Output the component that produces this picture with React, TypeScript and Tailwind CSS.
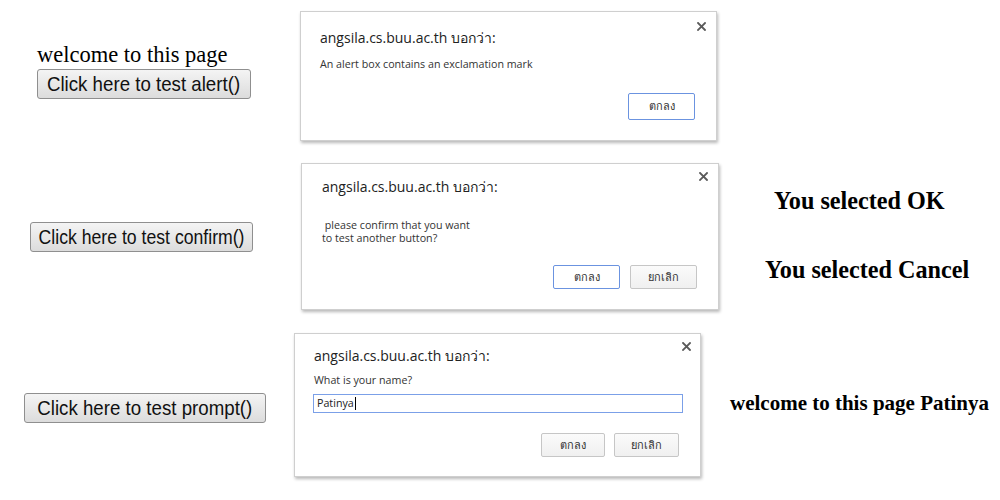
import React from "react";

const sans = { fontFamily: '"Open Sans", "Noto Sans", "DejaVu Sans", sans-serif' };

function CloseX() {
  return (
    <svg width="9" height="9" viewBox="0 0 9 9" className="block">
      <path d="M1 1 L8 8 M8 1 L1 8" stroke="#5a5a5a" strokeWidth="1.8" strokeLinecap="square" />
    </svg>
  );
}

function DlgButton({ label, primary }: { label: string; primary?: boolean }) {
  return (
    <div
      className={
        "flex items-center justify-center rounded-[2px] text-[11px] font-medium text-[#333] " +
        (primary
          ? "border border-[#6b93e0] bg-white"
          : "border border-[#c6c6c6] bg-gradient-to-b from-[#fbfbfb] to-[#f0f0f0]")
      }
      style={{ ...sans, width: "inherit", height: "inherit" }}
    >
      {label}
    </div>
  );
}

function Dialog({
  w,
  h,
  children,
  closeTop,
  closeRight,
}: {
  w: string;
  h: string;
  children: React.ReactNode;
  closeTop: string;
  closeRight: string;
}) {
  return (
    <div
      className={`relative bg-white border border-[#cfcfcf] shadow-[1px_2px_3px_rgba(0,0,0,0.28)] ${w} ${h}`}
      style={sans}
    >
      <div className={`absolute ${closeTop} ${closeRight}`}>
        <CloseX />
      </div>
      {children}
    </div>
  );
}

function PageButton({ label, w, scale }: { label: string; w: string; scale: string }) {
  return (
    <div
      className={`flex h-[30px] items-center justify-center whitespace-nowrap rounded-[3px] border border-[#8f8f8f] bg-gradient-to-b from-[#f4f4f4] to-[#dcdcdc] text-[21px] text-[#111] ${w}`}
      style={{ fontFamily: '"Liberation Sans", Arial, sans-serif' }}
    >
      <span className={`inline-block ${scale}`}>{label}</span>
    </div>
  );
}

const serif = { fontFamily: '"Liberation Serif", "Times New Roman", serif' };

export default function App() {
  return (
    <div className="w-[1000px] h-[500px] bg-white overflow-hidden flex flex-col">
      {/* Row 1 */}
      <div className="flex h-[152px] shrink-0">
        <div className="w-[300px] shrink-0 pl-[37px] pt-[43px]">
          <div className="text-[22.5px] leading-[24px] text-black" style={serif}>
            welcome to this page
          </div>
          <div className="mt-[2px]">
            <PageButton label="Click here to test alert()" w="w-[214px]" scale="scale-x-[0.89]" />
          </div>
        </div>
        <div className="mt-[11px]">
          <Dialog w="w-[417px]" h="h-[130px]" closeTop="top-[10px]" closeRight="right-[10px]">
            <div className="pl-[19px] pt-[16px] text-[14px] leading-[20px] text-[#222]">
              angsila.cs.buu.ac.th บอกว่า:
            </div>
            <div className="pl-[19px] pt-[8px] text-[10.7px] leading-[16px] text-[#333]">
              An alert box contains an exclamation mark
            </div>
            <div className="flex justify-end pr-[21px] pt-[21px]">
              <div className="w-[67px] h-[27px]">
                <DlgButton label="ตกลง" primary />
              </div>
            </div>
          </Dialog>
        </div>
      </div>

      {/* Row 2 */}
      <div className="flex h-[168px] shrink-0">
        <div className="w-[301px] shrink-0 pl-[30px] pt-[70px]">
          <PageButton label="Click here to test confirm()" w="w-[223px]" scale="scale-x-[0.84]" />
        </div>
        <div className="mt-[11px]">
          <Dialog w="w-[418px]" h="h-[147px]" closeTop="top-[8px]" closeRight="right-[10px]">
            <div className="pl-[20px] pt-[13px] text-[14px] leading-[20px] text-[#222]">
              angsila.cs.buu.ac.th บอกว่า:
            </div>
            <div className="pl-[20px] pt-[22px] text-[10.7px] leading-[13px] text-[#333] whitespace-pre">
              {" please confirm that you want\nto test another button?"}
            </div>
            <div className="flex justify-end gap-[10px] pr-[21px] pt-[20px]">
              <div className="w-[67px] h-[24px]">
                <DlgButton label="ตกลง" primary />
              </div>
              <div className="w-[67px] h-[24px]">
                <DlgButton label="ยกเลิก" />
              </div>
            </div>
          </Dialog>
        </div>
        <div className="flex flex-col pl-[46px] pt-[34px] text-[24.2px] font-bold text-black" style={serif}>
          <div className="pl-[9px] leading-[30px]">You selected OK</div>
          <div className="mt-[39px] leading-[30px]">You selected Cancel</div>
        </div>
      </div>

      {/* Row 3 */}
      <div className="flex h-[180px] shrink-0">
        <div className="w-[294px] shrink-0 pl-[24px] pt-[73px]">
          <PageButton label="Click here to test prompt()" w="w-[242px]" scale="scale-x-[0.89]" />
        </div>
        <div className="mt-[13px]">
          <Dialog w="w-[407px]" h="h-[144px]" closeTop="top-[8px]" closeRight="right-[9px]">
            <div className="pl-[19px] pt-[12px] text-[14px] leading-[20px] text-[#222]">
              angsila.cs.buu.ac.th บอกว่า:
            </div>
            <div className="pl-[19px] pt-[6px] text-[10.7px] leading-[16px] text-[#333]">
              What is your name?
            </div>
            <div className="pl-[18px] pt-[6px]">
              <div className="flex h-[19px] w-[370px] items-center border border-[#7ba0e8] pl-[3px] text-[10.7px] text-[#222]">
                Patinya
                <span className="ml-[1px] inline-block h-[13px] w-[1px] bg-black" />
              </div>
            </div>
            <div className="flex justify-end gap-[9px] pr-[21px] pt-[20px]">
              <div className="w-[64px] h-[24px]">
                <DlgButton label="ตกลง" />
              </div>
              <div className="w-[65px] h-[24px]">
                <DlgButton label="ยกเลิก" />
              </div>
            </div>
          </Dialog>
        </div>
        <div className="pl-[29px] pt-[71px] text-[21px] font-bold leading-[24px] text-black" style={serif}>
          welcome to this page Patinya
        </div>
      </div>
    </div>
  );
}
